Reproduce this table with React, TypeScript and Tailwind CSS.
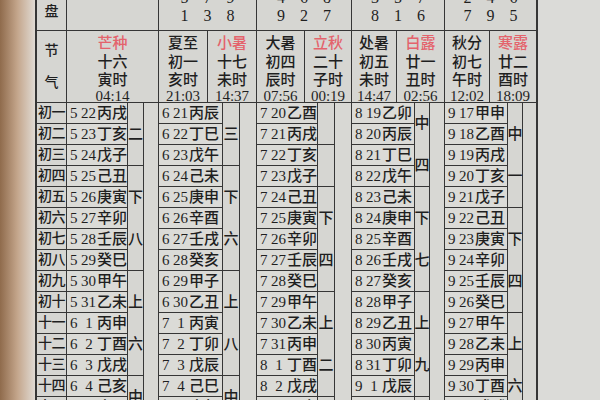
import React from 'react'

interface Term {
    name: string
    red?: boolean
    day: string
    hour: string
    time: string
    width?: string
}

interface Segment {
    rows: number
    chars: string
    line?: boolean
}

interface Month {
    width: string
    border: string
    dateW: string
    smallW: string
    pan: string[][] | null
    terms: Term[]
    days: [string, string, string][]
    segments: Segment[]
}

const ROW = 21

const labels = ['初一', '初二', '初三', '初四', '初五', '初六', '初七', '初八', '初九', '初十', '十一', '十二', '十三', '十四', '十五']

const months: Month[] = [
    {
        width: 'w-[92px]',
        border: 'border-r',
        dateW: 'w-[61px]',
        smallW: 'w-[16px]',
        pan: null,
        terms: [{ name: '芒种', red: true, day: '十六', hour: '寅时', time: '04:14' }],
        days: [
            ['5', '22', '丙戌'], ['5', '23', '丁亥'], ['5', '24', '戊子'], ['5', '25', '己丑'], ['5', '26', '庚寅'],
            ['5', '27', '辛卯'], ['5', '28', '壬辰'], ['5', '29', '癸巳'], ['5', '30', '甲午'], ['5', '31', '乙未'],
            ['6', '1', '丙申'], ['6', '2', '丁酉'], ['6', '3', '戊戌'], ['6', '4', '己亥'], ['6', '5', '庚子'],
        ],
        segments: [
            { rows: 3, chars: '二', line: true },
            { rows: 5, chars: '下八', line: true },
            { rows: 5, chars: '上六', line: true },
            { rows: 2, chars: '中' },
        ],
    },
    {
        width: 'w-[98px]',
        border: 'border-r',
        dateW: 'w-[64px]',
        smallW: 'w-[17px]',
        pan: [['6', '2', '4'], ['5', '7', '9'], ['1', '3', '8']],
        terms: [
            { name: '夏至', day: '初一', hour: '亥时', time: '21:03', width: 'w-[49px]' },
            { name: '小暑', red: true, day: '十七', hour: '未时', time: '14:37' },
        ],
        days: [
            ['6', '21', '丙辰'], ['6', '22', '丁巳'], ['6', '23', '戊午'], ['6', '24', '己未'], ['6', '25', '庚申'],
            ['6', '26', '辛酉'], ['6', '27', '壬戌'], ['6', '28', '癸亥'], ['6', '29', '甲子'], ['6', '30', '乙丑'],
            ['7', '1', '丙寅'], ['7', '2', '丁卯'], ['7', '3', '戊辰'], ['7', '4', '己巳'], ['7', '5', '庚午'],
        ],
        segments: [
            { rows: 3, chars: '三', line: true },
            { rows: 5, chars: '下六', line: true },
            { rows: 5, chars: '上八', line: true },
            { rows: 2, chars: '中' },
        ],
    },
    {
        width: 'w-[95px]',
        border: 'border-r',
        dateW: 'w-[61px]',
        smallW: 'w-[17px]',
        pan: [['5', '1', '3'], ['4', '6', '8'], ['9', '2', '7']],
        terms: [
            { name: '大暑', day: '初四', hour: '辰时', time: '07:56', width: 'w-[48px]' },
            { name: '立秋', red: true, day: '二十', hour: '子时', time: '00:19' },
        ],
        days: [
            ['7', '20', '乙酉'], ['7', '21', '丙戌'], ['7', '22', '丁亥'], ['7', '23', '戊子'], ['7', '24', '己丑'],
            ['7', '25', '庚寅'], ['7', '26', '辛卯'], ['7', '27', '壬辰'], ['7', '28', '癸巳'], ['7', '29', '甲午'],
            ['7', '30', '乙未'], ['7', '31', '丙申'], ['8', '1', '丁酉'], ['8', '2', '戊戌'], ['8', '3', '己亥'],
        ],
        segments: [
            { rows: 2, chars: '', line: true },
            { rows: 2, chars: '', line: true },
            { rows: 5, chars: '下四', line: true },
            { rows: 5, chars: '上二', line: true },
            { rows: 1, chars: '' },
        ],
    },
    {
        width: 'w-[93px]',
        border: 'border-r',
        dateW: 'w-[63px]',
        smallW: 'w-[15px]',
        pan: [['4', '9', '2'], ['3', '5', '7'], ['8', '1', '6']],
        terms: [
            { name: '处暑', day: '初五', hour: '未时', time: '14:47', width: 'w-[45px]' },
            { name: '白露', red: true, day: '廿一', hour: '丑时', time: '02:56' },
        ],
        days: [
            ['8', '19', '乙卯'], ['8', '20', '丙辰'], ['8', '21', '丁巳'], ['8', '22', '戊午'], ['8', '23', '己未'],
            ['8', '24', '庚申'], ['8', '25', '辛酉'], ['8', '26', '壬戌'], ['8', '27', '癸亥'], ['8', '28', '甲子'],
            ['8', '29', '乙丑'], ['8', '30', '丙寅'], ['8', '31', '丁卯'], ['9', '1', '戊辰'], ['9', '2', '己巳'],
        ],
        segments: [
            { rows: 4, chars: '中四', line: true },
            { rows: 5, chars: '下七', line: true },
            { rows: 5, chars: '上九', line: true },
            { rows: 1, chars: '' },
        ],
    },
    {
        width: 'w-[93px]',
        border: 'border-r-2',
        dateW: 'w-[63px]',
        smallW: 'w-[15px]',
        pan: [['3', '8', '1'], ['2', '4', '6'], ['7', '9', '5']],
        terms: [
            { name: '秋分', day: '初七', hour: '午时', time: '12:02', width: 'w-[45px]' },
            { name: '寒露', red: true, day: '廿二', hour: '酉时', time: '18:09' },
        ],
        days: [
            ['9', '17', '甲申'], ['9', '18', '乙酉'], ['9', '19', '丙戌'], ['9', '20', '丁亥'], ['9', '21', '戊子'],
            ['9', '22', '己丑'], ['9', '23', '庚寅'], ['9', '24', '辛卯'], ['9', '25', '壬辰'], ['9', '26', '癸巳'],
            ['9', '27', '甲午'], ['9', '28', '乙未'], ['9', '29', '丙申'], ['9', '30', '丁酉'], ['10', '1', '戊戌'],
        ],
        segments: [
            { rows: 5, chars: '中一', line: true },
            { rows: 5, chars: '下四', line: true },
            { rows: 5, chars: '上六' },
        ],
    },
]

function TermCell({ term, last }: { term: Term; last: boolean }) {
    return (
        <div
            className={`flex flex-col items-center pt-[3px] ${
                last ? 'flex-1' : `${term.width} shrink-0 border-r border-[#363636]`
            }`}
        >
            <div className={`h-[19px] shrink-0 leading-[19px] text-[15px] ${term.red ? 'text-[#e4636c]' : ''}`}>
                {term.name}
            </div>
            <div className="h-[19px] shrink-0 leading-[19px] text-[15px]">{term.day}</div>
            <div className="h-[17px] shrink-0 leading-[17px] text-[15px]">{term.hour}</div>
            <div className="h-[14px] shrink-0 leading-[14px] text-[15px]">{term.time}</div>
        </div>
    )
}

function MonthColumn({ month }: { month: Month }) {
    return (
        <div className={`${month.width} ${month.border} border-[#363636] flex flex-col shrink-0`}>
            {/* 盘 */}
            <div className="h-[60px] shrink-0 border-b border-[#363636] flex flex-col">
                {month.pan?.map((line, i) => (
                    <div key={i} className="h-[18px] shrink-0 leading-[18px] flex justify-center text-[16px]">
                        {line.map((d, j) => (
                            <span key={j} className="w-[23px] text-center">
                                {d}
                            </span>
                        ))}
                    </div>
                ))}
            </div>

            {/* 节气 */}
            <div className="h-[72px] shrink-0 border-b border-[#363636] flex">
                {month.terms.map((t, i) => (
                    <TermCell key={t.name} term={t} last={i === month.terms.length - 1} />
                ))}
            </div>

            {/* Days */}
            <div className="flex shrink-0">
                <div className={`${month.dateW} border-r border-[#363636] shrink-0`}>
                    {month.days.map(([m, d, gz]) => (
                        <div
                            key={m + d}
                            className="h-[21px] border-b border-[#363636] flex items-center pl-[3px] whitespace-nowrap overflow-hidden text-[15px] leading-[20px] bg-[#dbdbd7]"
                        >
                            <span className="min-w-[11px]">{m}</span>
                            <span className={`w-[16px] ${d.length === 1 ? 'text-center' : ''}`}>{d}</span>
                            <span>{gz}</span>
                        </div>
                    ))}
                </div>
                <div className={`${month.smallW} border-r border-[#363636] shrink-0`}>
                    {month.segments.map((s, i) => (
                        <div
                            key={i}
                            style={{ height: s.rows * ROW }}
                            className={`flex flex-col items-center justify-center gap-[21px] text-[15px] ${
                                s.line ? 'border-b border-[#363636]' : ''
                            }`}
                        >
                            {s.chars.split('').map((c, j) => (
                                <span key={j} className="leading-[21px]">
                                    {c}
                                </span>
                            ))}
                        </div>
                    ))}
                </div>
                <div className="flex-1 h-[315px] bg-[#d8d8d4]" />
            </div>
        </div>
    )
}

export default function App() {
    return (
        <div className="w-[600px] h-[400px] overflow-hidden flex items-start bg-[#d6d6d2] text-[#1f1f1f] font-medium font-['Liberation_Serif','Noto_Sans_CJK_SC',serif]">
            {/* book binding */}
            <div className="w-[35px] h-full shrink-0 bg-linear-to-r from-[#8f6b4c] via-[#c4a68c] to-[#e0dbd4]" />

            {/* Table */}
            <div className="flex -mt-[29px] border-l-2 border-[#363636] shrink-0">
                <div className="w-[30px] border-r border-[#363636] flex flex-col shrink-0">
                    <div className="h-[60px] shrink-0 border-b border-[#363636] flex items-end justify-center pb-[8px] text-[14px]">
                        盘
                    </div>
                    <div className="h-[72px] shrink-0 border-b border-[#363636] flex flex-col items-center justify-around text-[14px] py-[4px]">
                        <span>节</span>
                        <span>气</span>
                    </div>
                    {labels.map((l) => (
                        <div
                            key={l}
                            className="h-[21px] shrink-0 border-b border-[#363636] flex items-center justify-center text-[14px] tracking-[-0.5px] leading-[20px]"
                        >
                            {l}
                        </div>
                    ))}
                </div>
                {months.map((m, i) => (
                    <MonthColumn key={i} month={m} />
                ))}
            </div>

            {/* Page margin */}
            <div className="flex-1 h-full bg-[#dbdbd8]" />
        </div>
    )
}
